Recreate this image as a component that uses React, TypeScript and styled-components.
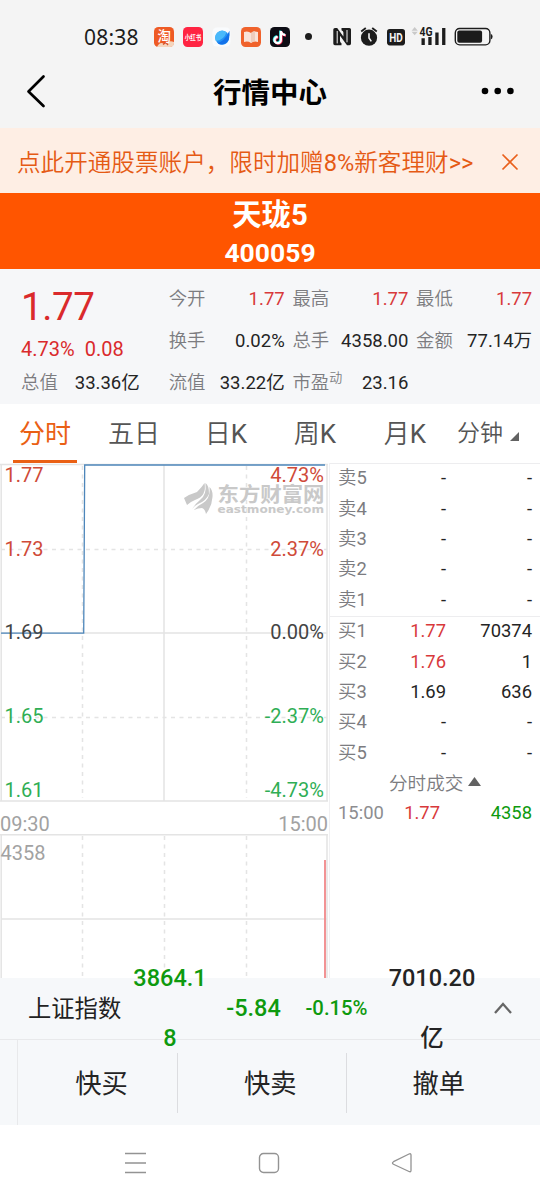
import React from 'react';
import styled, { createGlobalStyle } from 'styled-components';

const GlobalStyle = createGlobalStyle`
  * { box-sizing: border-box; }
  body {
    margin: 0;
    background: #fff;
    font-family: Roboto, "Noto Sans CJK SC", sans-serif;
    color: #222;
  }
`;

const RED = '#d8393b';
const GREEN = '#0e9a0e';
const INK = '#242424';

const Page = styled.div`
  width: 540px;
  height: 1200px;
  display: flex;
  flex-direction: column;
  overflow: hidden;
  background: #fff;
`;

const Latin = styled.span`
  font-weight: 400;
`;

/* ---------- status bar ---------- */

const StatusBar = styled.div`
  height: 60px;
  flex: none;
  display: flex;
  align-items: center;
  padding: 13px 45px 0 84px;
  background: #f4f4f4;
`;

const Clock = styled.span`
  width: 70px;
  flex: none;
  font-family: "Noto Sans", sans-serif;
  font-size: 21px;
  line-height: 24px;
  letter-spacing: 0.2px;
  color: #1c1c1c;
`;

const AppIcons = styled.div`
  display: flex;
  flex: none;
  gap: 9px;
`;

const AppIcon = styled.svg`
  width: 20px;
  height: 20px;
  display: block;
`;

const Dot = styled.i`
  width: 7px;
  height: 7px;
  flex: none;
  margin-left: 15px;
  border-radius: 50%;
  background: #1c1c1c;
`;

const SystemIcons = styled.svg`
  width: 162px;
  height: 24px;
  margin-left: 21px;
  margin-top: -1px;
  flex: none;
`;

/* ---------- title bar ---------- */

const TitleBar = styled.header`
  height: 68px;
  flex: none;
  display: flex;
  align-items: center;
  justify-content: space-between;
  padding: 0 25px 7px 26px;
  background: #f4f4f4;
`;

const Title = styled.h1`
  margin: 0;
  padding: 7px 0 0 13px;
  font-size: 28.5px;
  line-height: 40px;
  font-weight: 700;
  color: #000;
`;

/* ---------- promo ---------- */

const Promo = styled.div`
  height: 65px;
  flex: none;
  display: flex;
  align-items: center;
  justify-content: space-between;
  padding: 2px 21px 0 17px;
  background: #feeee4;
  color: #e55a14;
  font-size: 23.6px;
  font-weight: 350;
  white-space: nowrap;
`;

const PromoText = styled.span`
  padding-bottom: 2px;
`;

const StockHeader = styled.div`
  height: 76px;
  flex: none;
  padding-top: 2px;
  background: #ff5500;
  color: #fff;
  text-align: center;
  font-weight: 700;
`;

const StockName = styled.div`
  font-size: 29.3px;
  line-height: 40px;
`;

const StockCode = styled.div`
  font-size: 26.5px;
  line-height: 35px;
`;

/* ---------- quote ---------- */

const Quote = styled.section`
  height: 135px;
  flex: none;
  display: grid;
  grid-template-columns: 140px 116px 116px 116px;
  grid-template-rows: repeat(3, 42px);
  column-gap: 7.7px;
  padding: 9px 0 0 21px;
  background: #f6f7f9;
`;

const PriceBlock = styled.div`
  grid-row: span 2;
  color: #da2a2c;
`;

const Price = styled.div`
  font-size: 38.6px;
  line-height: 44px;
  letter-spacing: -0.4px;
  padding-top: 7px;
`;

const Change = styled.div`
  display: flex;
  gap: 10px;
  margin-top: 7px;
  font-size: 20px;
  line-height: 26px;
`;

const Field = styled.div`
  display: flex;
  align-items: center;
  justify-content: space-between;
  white-space: nowrap;
  line-height: 24px;
`;

const TotalField = styled(Field)`
  justify-content: flex-start;
  gap: 17px;
`;

const FieldLabel = styled.span`
  padding-bottom: 1px;
  font-size: 18.4px;
  font-weight: 350;
  color: #7c7c80;

  sup {
    font-size: 13px;
    line-height: 0;
    vertical-align: 7px;
  }
`;

const FieldValue = styled.span<{ $color?: string }>`
  font-size: 18.5px;
  color: ${(p) => p.$color ?? INK};
`;

/* ---------- tabs ---------- */

const Tabs = styled.nav`
  height: 59px;
  flex: none;
  display: flex;
`;

const Tab = styled.div<{ $width: number; $active?: boolean; $small?: boolean }>`
  width: ${(p) => p.$width}px;
  height: 59px;
  display: flex;
  justify-content: center;
  align-items: center;
  gap: 7px;
  font-size: ${(p) => (p.$small ? 23 : 26)}px;
  font-weight: ${(p) => (p.$active ? 400 : 350)};
  color: ${(p) => (p.$active ? '#ea6014' : '#555')};

  > span {
    height: 59px;
    line-height: 60px;
    padding: 0 6px;
    ${(p) => p.$active && 'border-bottom: 3px solid #ea6014;'}
  }
  ${(p) => p.$small && '> span { padding: 0; } svg { margin-top: 6px; }'}
`;

/* ---------- chart and order book ---------- */

const Main = styled.main`
  height: 515px;
  flex: none;
  display: flex;
`;

const Chart = styled.svg`
  width: 329px;
  height: 515px;
  flex: none;
  display: block;
`;

const Book = styled.div`
  flex: 1;
  border-left: 1px solid #f0f0f2;
`;

const BookSide = styled.div`
  border-top: 1px solid #ededef;
`;

const BookRow = styled.div`
  height: 30.4px;
  display: grid;
  grid-template-columns: 50px 58px 1fr;
  align-items: center;
  padding: 0 8px 2px;
  font-size: 18.4px;
  line-height: 26px;
  white-space: nowrap;
`;

const TradeRow = styled(BookRow)`
  grid-template-columns: 50px 52px 1fr;
`;

const BookLabel = styled.span`
  font-weight: 350;
  color: #7c7c80;
`;

const TradeTime = styled.span`
  color: #8d8d90;
`;

const BookValue = styled.span<{ $color?: string }>`
  text-align: right;
  color: ${(p) => p.$color ?? INK};
`;

const TradesHeading = styled.div`
  height: 30px;
  display: flex;
  align-items: center;
  gap: 5px;
  padding: 0 0 4px 59px;
  font-size: 18.6px;
  font-weight: 350;
  color: #7c7c80;
`;

/* ---------- index strip ---------- */

const IndexStrip = styled.div`
  height: 62px;
  flex: none;
  display: flex;
  align-items: center;
  padding-bottom: 1px;
  z-index: 1;
  border-bottom: 1px solid #e8e9eb;
  background: #f6f8fa;
  font-weight: 500;
`;

const IndexName = styled.span`
  width: 133px;
  flex: none;
  padding: 0 0 2px 28px;
  font-size: 23.3px;
  font-weight: 400;
  white-space: nowrap;
`;

const IndexValue = styled.span<{ $width: number; $size?: number; $color?: string }>`
  width: ${(p) => p.$width}px;
  flex: none;
  font-size: ${(p) => p.$size ?? 23.5}px;
  line-height: 60px;
  text-align: center;
  word-break: break-all;
  color: ${(p) => p.$color ?? INK};
`;

const Turnover = styled(IndexValue)`
  margin-left: 9px;
`;

const Expand = styled.svg`
  width: 20px;
  height: 14px;
  margin-left: 11px;
  flex: none;
`;

/* ---------- action bar ---------- */

const Actions = styled.div`
  height: 85px;
  flex: none;
  display: flex;
  align-items: center;
  background: #f6f8fa;
`;

const ActionEdge = styled.div`
  width: 18px;
  height: 85px;
  border-right: 1px solid #e8e9eb;
`;

const Action = styled.div<{ $width: number; $shift: number }>`
  width: ${(p) => p.$width}px;
  height: 60px;
  margin-top: 1px;
  padding-left: ${(p) => p.$shift}px;
  text-align: center;
  font-size: 26.3px;
  line-height: 62px;
  color: ${INK};

  & + & {
    border-left: 1px solid #dcdde0;
  }
`;

const SystemNav = styled.div`
  flex: 1;
  display: flex;
  align-items: center;
  justify-content: space-between;
  padding: 0 127px 0 125px;

  svg {
    display: block;
  }
`;

type Level = { side: string; depth: number; price: string; volume: string; color?: string };

const asks: Level[] = [5, 4, 3, 2, 1].map((depth) => ({
  side: '卖',
  depth,
  price: '-',
  volume: '-',
}));

const bids: Level[] = [
  { side: '买', depth: 1, price: '1.77', volume: '70374', color: RED },
  { side: '买', depth: 2, price: '1.76', volume: '1', color: RED },
  { side: '买', depth: 3, price: '1.69', volume: '636' },
  { side: '买', depth: 4, price: '-', volume: '-' },
  { side: '买', depth: 5, price: '-', volume: '-' },
];

const fields = [
  { label: '今开', value: '1.77', color: RED },
  { label: '最高', value: '1.77', color: RED },
  { label: '最低', value: '1.77', color: RED },
  { label: '换手', value: '0.02%' },
  { label: '总手', value: '4358.00' },
  { label: '金额', value: '77.14万' },
];

const axis = [
  { y: 18.6, left: '1.77', right: '4.73%', color: '#cf4a38' },
  { y: 92.6, left: '1.73', right: '2.37%', color: '#cf4a38' },
  { y: 176.3, left: '1.69', right: '0.00%', color: '#444' },
  { y: 260.3, left: '1.65', right: '-2.37%', color: '#2fae55' },
  { y: 334.3, left: '1.61', right: '-4.73%', color: '#2fae55' },
];

function Levels({ levels }: { levels: Level[] }) {
  return (
    <BookSide>
      {levels.map((l) => (
        <BookRow key={l.depth}>
          <BookLabel>{l.side}<Latin>{l.depth}</Latin></BookLabel>
          <BookValue $color={l.color}>{l.price}</BookValue>
          <BookValue>{l.volume}</BookValue>
        </BookRow>
      ))}
    </BookSide>
  );
}

function StatusIcons() {
  return (
    <>
      <AppIcons>
        <AppIcon viewBox="0 0 20 20">
          <rect width="20" height="20" rx="4.5" fill="#ee5a24" />
          <path d="M3 20 Q6 14 10 17 Q15 13 20 15 V16 Q20 20 16 20Z" fill="#f4d5bd" />
          <path d="M9 17.5 L12 15.5 L14 18" fill="none" stroke="#d9532c" strokeWidth="1.3" />
          <text x="10.2" y="14" textAnchor="middle" fontSize="13.5" fontWeight="500" fill="#fff">淘</text>
        </AppIcon>
        <AppIcon viewBox="0 0 20 20">
          <rect width="20" height="20" rx="4.5" fill="#ff2442" />
          <text x="10" y="12.7" textAnchor="middle" fontSize="7" textLength="16.5" lengthAdjust="spacingAndGlyphs" fontWeight="700" fill="#fff">小红书</text>
        </AppIcon>
        <AppIcon viewBox="0 0 20 20">
          <rect x="0.5" y="0.5" width="18" height="19" rx="4.5" fill="#f9fbfd" />
          <circle cx="10.2" cy="10.7" r="7" fill="#2492f4" />
          <path d="M3.2 11 A7 7 0 0 1 14.5 5.2 Q12 13 3.8 14 Q3.2 12.7 3.2 11Z" fill="#49b9fa" />
          <path d="M2.6 17.2 Q13 15 17.4 3.8 Q18.2 8 16.6 13 Q14 17.5 9 17.6 Q6 17.4 5.8 16Z" fill="#1271ea" />
        </AppIcon>
        <AppIcon viewBox="0 0 20 20">
          <rect width="20" height="20" rx="4.5" fill="#f0622b" />
          <path d="M3 5 Q7 3.4 10 6 Q13 3.4 17 5 V15 Q13 13.8 10 16 Q7 13.8 3 15Z" fill="#f9e3d8" />
          <path d="M10 6 Q13 3.4 14 4.4 V14 Q12 14.4 10 16Z" fill="#eecdbd" />
        </AppIcon>
        <AppIcon viewBox="0 0 20 20">
          <rect width="20" height="20" rx="4.5" fill="#0d0d14" />
          <g fill="none" strokeWidth="2.2">
            <path d="M10.2 3.6 V12.5 A3.2 3.2 0 1 1 7 9.3 M10.2 4 Q11 7.2 14.8 7.6" stroke="#27e3e0" />
            <path d="M11.6 4.6 V13.5 A3.2 3.2 0 1 1 8.4 10.3 M11.6 5 Q12.4 8.2 16 8.6" stroke="#f8335c" />
            <path d="M10.9 4 V13 A3.2 3.2 0 1 1 7.7 9.8 M10.9 4.4 Q11.7 7.6 15.4 8" stroke="#fff" />
          </g>
        </AppIcon>
      </AppIcons>
      <Dot />
      <SystemIcons viewBox="333 24 162 24">
        <g fill="#1c1c1c">
          <path d="M335 28 H337.2 L343.4 36.4 V32.5 Q343.4 31 341.5 30.2 V28 H349.4 Q351 28 351 29.6 V43.6 Q351 45.2 349.4 45.2 H347 L340 35.8 V41 Q340 42.5 341.5 43.3 V45.2 H334.9 Q333.3 45.2 333.3 43.6 V29.6 Q333.3 28 335 28Z" />
          <path d="M337.2 31 V43.4 M347 30 V42.3" stroke="#f4f4f4" strokeWidth="1" />
          <circle cx="369" cy="37.7" r="8.1" />
          <path d="M361.2 31.4 L365.8 28 M376.8 31.4 L372.2 28" stroke="#1c1c1c" strokeWidth="1.9" />
          <path d="M369 33.3 V38 L371.3 41.4" fill="none" stroke="#f4f4f4" strokeWidth="1.6" />
          <rect x="387" y="29" width="18" height="16.4" rx="2.8" />
          <path d="M414.7 27 L417.8 30.7 H411.6Z M414.7 35.2 L417.8 31.8 H411.6Z" fill="#c9c9c9" />
          <path d="M421.5 38.3 h3.3 v6.7 h-3.3Z M428.3 37 h3.3 v8 h-3.3Z M435.3 32.5 h3.3 v12.5 h-3.3Z M442.1 28 h3.3 v17 h-3.3Z" />
          <rect x="457.3" y="30.6" width="24.8" height="12.1" rx="2" />
          <path d="M490.8 34 Q492.6 34.3 492.6 36.6 Q492.6 39 490.8 39.4Z" />
        </g>
        <rect x="455.3" y="28.5" width="34.6" height="16.4" rx="4.4" fill="none" stroke="#1c1c1c" strokeWidth="1.4" />
        <text x="396" y="41.6" textAnchor="middle" fontSize="12" fontWeight="700" textLength="13.5" lengthAdjust="spacingAndGlyphs" fill="#f4f4f4">HD</text>
        <text x="419.5" y="35.7" fontSize="12" fontWeight="700" textLength="13" lengthAdjust="spacingAndGlyphs" fill="#1c1c1c" stroke="#f4f4f4" strokeWidth="1.2" paintOrder="stroke">4G</text>
      </SystemIcons>
    </>
  );
}

function PriceChart() {
  return (
    <Chart viewBox="0 0 329 515">
      <g stroke="#e4e4e4" strokeWidth="1.5" fill="none">
        <path d="M1.2 2 V338 M0 338 H328 M0 1.5 H328 M327 1 V338 M164 2 V338 M1 170 H327" />
        <path d="M1.2 372 V515 M0 371.7 H328 M327 372 V515 M1 456 H327" />
        <path d="M82.5 3 V335 M246.5 3 V335 M82.5 373 V515 M164.5 373 V515 M246.5 373 V515" strokeDasharray="4 4.5" />
        <path d="M1 86.5 H327 M1 254.5 H327" strokeDasharray="4 4.5" />
      </g>
      <g fill="#c9c9c9">
        <path d="M184 35 Q190 31 197 29 Q202 24 204.5 20 Q207 33 195 37 Q190 39 187 42Z" />
        <path d="M205.4 20 Q209 22 209 31 Q206 38 198 41 Q194 43 192 46 Q195 41 200 37 Q207 32 205.4 20Z" />
        <path d="M209.4 24 Q213 27 212.5 34 Q212 43 206 51 Q205 46 202 45 Q198 45 194 47 Q197 43 203 40 Q211 35 209.4 24Z" />
        <text x="217.5" y="38.8" fontSize="20" fontWeight="700" textLength="107" lengthAdjust="spacingAndGlyphs">东方财富网</text>
        <text x="217.5" y="50" fontSize="11" fontWeight="700" fontFamily="'DejaVu Sans', sans-serif" textLength="106.5" lengthAdjust="spacingAndGlyphs">eastmoney.com</text>
      </g>
      <path d="M1 170.2 H83.7 L84.7 2 H325" fill="none" stroke="#4d86ba" strokeWidth="1.3" />
      <path d="M325 397 V515" stroke="#f29394" strokeWidth="2" />
      <g fontSize="20">
        {axis.map((a) => (
          <React.Fragment key={a.left}>
            <text x="4.5" y={a.y} fill={a.color}>{a.left}</text>
            <text x="324" y={a.y} fill={a.color} textAnchor="end">{a.right}</text>
          </React.Fragment>
        ))}
        <g fill="#a2a2a2">
          <text x="0" y="367.5">09:30</text>
          <text x="328" y="367.5" textAnchor="end">15:00</text>
          <text x="0.5" y="397">4358</text>
        </g>
      </g>
    </Chart>
  );
}

export default function App() {
  return (
    <Page>
      <GlobalStyle />
      <StatusBar>
        <Clock>08:38</Clock>
        <StatusIcons />
      </StatusBar>
      <TitleBar>
        <svg width="20" height="34" viewBox="0 0 20 34">
          <path d="M17.5 2.5 L2.5 17.5 L17.5 32" fill="none" stroke="#000" strokeWidth="2.7" strokeLinecap="round" strokeLinejoin="round" />
        </svg>
        <Title>行情中心</Title>
        <svg width="34" height="8" viewBox="0 0 34 8">
          <circle cx="4" cy="4" r="3.3" />
          <circle cx="16.7" cy="4" r="3.3" />
          <circle cx="29.4" cy="4" r="3.3" />
        </svg>
      </TitleBar>
      <Promo>
        <PromoText>点此开通股票账户，限时加赠<Latin>8%</Latin>新客理财<Latin>&gt;&gt;</Latin></PromoText>
        <svg width="18" height="18" viewBox="0 0 18 18">
          <path d="M1.5 1.5 L16.5 16.5 M16.5 1.5 L1.5 16.5" stroke="#e9601c" strokeWidth="1.7" />
        </svg>
      </Promo>
      <StockHeader>
        <StockName>天珑5</StockName>
        <StockCode>400059</StockCode>
      </StockHeader>
      <Quote>
        <PriceBlock>
          <Price>1.77</Price>
          <Change>
            <span>4.73%</span>
            <span>0.08</span>
          </Change>
        </PriceBlock>
        {fields.map((f) => (
          <Field key={f.label}>
            <FieldLabel>{f.label}</FieldLabel>
            <FieldValue $color={f.color}>{f.value}</FieldValue>
          </Field>
        ))}
        <TotalField>
          <FieldLabel>总值</FieldLabel>
          <FieldValue>33.36亿</FieldValue>
        </TotalField>
        <Field>
          <FieldLabel>流值</FieldLabel>
          <FieldValue>33.22亿</FieldValue>
        </Field>
        <Field>
          <FieldLabel>市盈<sup>动</sup></FieldLabel>
          <FieldValue>23.16</FieldValue>
        </Field>
      </Quote>
      <Tabs>
        <Tab $width={90} $active><span>分时</span></Tab>
        <Tab $width={88}><span>五日</span></Tab>
        <Tab $width={96}><span>日<Latin>K</Latin></span></Tab>
        <Tab $width={82}><span>周<Latin>K</Latin></span></Tab>
        <Tab $width={98}><span>月<Latin>K</Latin></span></Tab>
        <Tab $width={68} $small>
          <span>分钟</span>
          <svg width="9" height="9" viewBox="0 0 9 9">
            <path d="M9 0 V9 H0Z" fill="#626262" />
          </svg>
        </Tab>
      </Tabs>
      <Main>
        <PriceChart />
        <Book>
          <Levels levels={asks} />
          <Levels levels={bids} />
          <TradesHeading>
            分时成交
            <svg width="13" height="9" viewBox="0 0 13 9">
              <path d="M6.5 0 L13 9 H0Z" fill="#626262" />
            </svg>
          </TradesHeading>
          <TradeRow>
            <TradeTime>15:00</TradeTime>
            <BookValue $color={RED}>1.77</BookValue>
            <BookValue $color={GREEN}>4358</BookValue>
          </TradeRow>
        </Book>
      </Main>
      <IndexStrip>
        <IndexName>上证指数</IndexName>
        <IndexValue $width={74} $color={GREEN}>3864.18</IndexValue>
        <IndexValue $width={93} $color={GREEN}>-5.84</IndexValue>
        <IndexValue $width={73} $size={20.3} $color={GREEN}>-0.15%</IndexValue>
        <Turnover $width={100}>7010.20亿</Turnover>
        <Expand viewBox="0 0 20 14">
          <path d="M2 12 L10 3 L18 12" fill="none" stroke="#666" strokeWidth="2.3" />
        </Expand>
      </IndexStrip>
      <Actions>
        <ActionEdge />
        <Action $width={159} $shift={8}>快买</Action>
        <Action $width={168.5} $shift={17}>快卖</Action>
        <Action $width={168.5} $shift={17}>撤单</Action>
      </Actions>
      <SystemNav>
        <svg width="22" height="22" viewBox="0 0 22 22">
          <path d="M0 1.5 H21 M0 11 H21 M0 20.5 H21" stroke="#939393" strokeWidth="1.4" />
        </svg>
        <svg width="22" height="22" viewBox="0 0 22 22">
          <rect x="1.5" y="1.5" width="19" height="19" rx="4" fill="none" stroke="#939393" strokeWidth="1.4" />
        </svg>
        <svg width="22" height="22" viewBox="0 0 22 22">
          <path d="M2.5 9.7 L18 2 Q20 1.2 20 3 V18.5 Q20 20.3 18 19.5 L2.5 12.3 Q0.4 11 2.5 9.7Z" fill="none" stroke="#939393" strokeWidth="1.3" />
        </svg>
      </SystemNav>
    </Page>
  );
}
